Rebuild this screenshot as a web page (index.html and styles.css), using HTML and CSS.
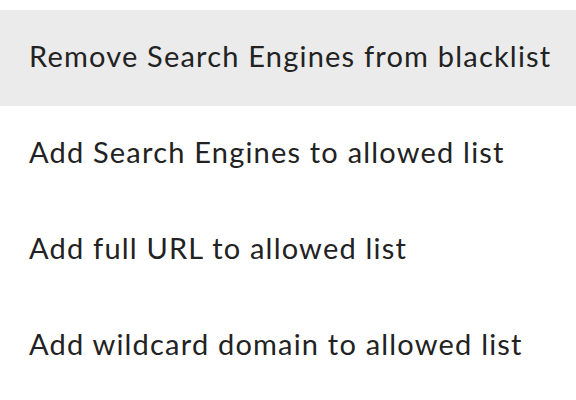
FILE: index.html
```html
<!DOCTYPE html>
<html lang="en">
<head>
<meta charset="utf-8">
<title>Menu</title>
<link rel="stylesheet" href="styles.css">
</head>
<body>
<ul class="menu" role="menu">
  <li class="menu-item is-active" role="menuitem">Remove Search Engines from blacklist</li>
  <li class="menu-item" role="menuitem">Add Search Engines to allowed list</li>
  <li class="menu-item" role="menuitem">Add full URL to allowed list</li>
  <li class="menu-item" role="menuitem">Add wildcard domain to allowed list</li>
</ul>
</body>
</html>
```
FILE: styles.css
```css
html, body {
  margin: 0;
  padding: 0;
  background: #ffffff;
}

.menu {
  list-style: none;
  margin: 0;
  padding: 10px 0 0;
  width: 576px;
  font-family: Lato, "Noto Sans", sans-serif;
  font-size: 29px;
  letter-spacing: 1.2px;
  color: #222222;
}

.menu-item {
  display: flex;
  align-items: center;
  box-sizing: border-box;
  height: 96px;
  padding: 0 0 6px 29px;
  white-space: nowrap;
}

.menu-item.is-active {
  background: #ebebeb;
}
```
